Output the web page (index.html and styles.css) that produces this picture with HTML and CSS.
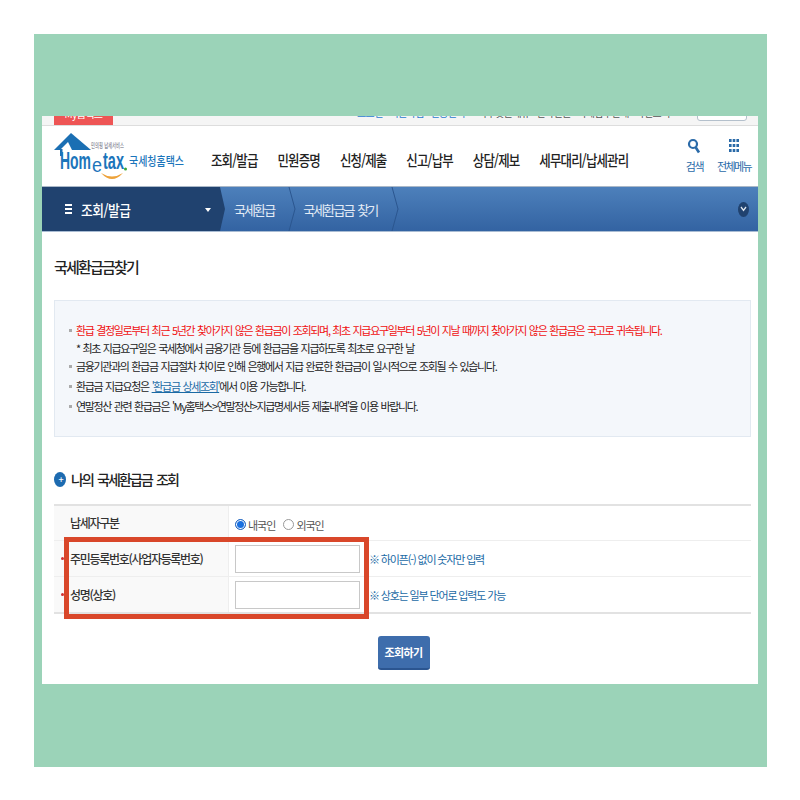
FILE: index.html
```html
<!DOCTYPE html>
<html lang="ko">
<head>
    <meta charset="UTF-8">
    <meta name="viewport" content="width=device-width, initial-scale=1.0">
    <title>국세환급금찾기</title>
    <link rel="stylesheet" href="styles.css">
</head>
<body>
    <div class="stage">
        <div class="shot">
            <div class="topstrip">
                <span class="mybadge">My홈택스</span>
                <span class="toplink blue">로그인 · 회원가입 · 인증센터</span>
                <span class="toplink dark">자주찾는메뉴 · 전자민원 · 국세납부안내 · 화면크기</span>
                <span class="zoombox"></span>
            </div>

            <header class="header">
                <svg class="logo" width="134" height="56" viewBox="0 0 134 56">
                    <path d="M1 22 L18 5 L38 22 Z" fill="#1b6fb3"/>
                    <path d="M7 22 L15 14 L19 22 Z" fill="#fff"/>
                    <path d="M7 21 H9.5 V28 H7 Z" fill="#1b6fb3"/>
                    <text x="38" y="20" class="logo-small" textLength="33" lengthAdjust="spacingAndGlyphs">민의핑 납세서비스</text>
                    <text x="7" y="41" class="logo-home" textLength="31" lengthAdjust="spacingAndGlyphs">Hom</text>
                    <text x="39" y="44" class="logo-e" textLength="10" lengthAdjust="spacingAndGlyphs">e</text>
                    <text x="50" y="41" class="logo-home" textLength="21" lengthAdjust="spacingAndGlyphs">tax</text>
                    <circle cx="72.5" cy="41" r="1.5" fill="#3aa535"/>
                    <path d="M48 45 Q59 57 70 45 Q59 52 48 45 Z" fill="#eda23a"/>
                    <text x="76" y="38" class="logo-name" textLength="55" lengthAdjust="spacingAndGlyphs">국세청홈택스</text>
                </svg>
                <nav class="gnb">
                    <span>조회/발급</span>
                    <span>민원증명</span>
                    <span>신청/제출</span>
                    <span>신고/납부</span>
                    <span>상담/제보</span>
                    <span>세무대리/납세관리</span>
                </nav>
                <div class="tools">
                    <div class="tool">
                        <svg width="14" height="16" viewBox="0 0 14 16"><circle cx="6" cy="6" r="4" fill="none" stroke="#2a6aa8" stroke-width="2.2"/><path d="M8.8 9.5 L12 14.5" stroke="#2a6aa8" stroke-width="2.6"/></svg>
                        <span>검색</span>
                    </div>
                    <div class="tool">
                        <svg width="14" height="16" viewBox="0 0 14 16" fill="#2a6aa8">
                            <rect x="2" y="1" width="2.6" height="3"/><rect x="5.7" y="1" width="2.6" height="3"/><rect x="9.4" y="1" width="2.6" height="3"/>
                            <rect x="2" y="6" width="2.6" height="3"/><rect x="5.7" y="6" width="2.6" height="3"/><rect x="9.4" y="6" width="2.6" height="3"/>
                            <rect x="2" y="11" width="2.6" height="3"/><rect x="5.7" y="11" width="2.6" height="3"/><rect x="9.4" y="11" width="2.6" height="3"/>
                        </svg>
                        <span>전체메뉴</span>
                    </div>
                </div>
            </header>

            <div class="crumbbar">
                <div class="crumb-main">
                    <span class="burger"></span>
                    <span class="crumb-title">조회/발급</span>
                    <span class="caret"></span>
                </div>
                <span class="crumb">국세환급</span>
                <svg class="sep" width="12" height="44" viewBox="0 0 12 44"><path d="M1 0 L7 22 L1 44" fill="none" stroke="#2b568f" stroke-width="1"/></svg>
                <span class="crumb">국세환급금 찾기</span>
                <svg class="sep" width="12" height="44" viewBox="0 0 12 44"><path d="M1 0 L7 22 L1 44" fill="none" stroke="#2b568f" stroke-width="1"/></svg>
                <span class="crumb-toggle">
                    <svg width="7" height="6" viewBox="0 0 7 6"><path d="M1 1 L3.5 4.5 L6 1" fill="none" stroke="#dfe6ef" stroke-width="1.3"/></svg>
                </span>
            </div>

            <main class="content">
                <h1 class="page-title">국세환급금찾기</h1>

                <ul class="notice">
                    <li class="red">환급 결정일로부터 최근 5년간 찾아가지 않은 환급금이 조회되며, 최초 지급요구일부터 5년이 지날 때까지 찾아가지 않은 환급금은 국고로 귀속됩니다.</li>
                    <li class="sub">* 최초 지급요구일은 국세청에서 금융기관 등에 환급금을 지급하도록 최초로 요구한 날</li>
                    <li>금융기관과의 환급금 지급절차 차이로 인해 은행에서 지급 완료한 환급금이 일시적으로 조회될 수 있습니다.</li>
                    <li>환급금 지급요청은 <a class="link" href="#">'환급금 상세조회'</a>에서 이용 가능합니다.</li>
                    <li>연말정산 관련 환급금은 'My홈택스&gt;연말정산&gt;지급명세서등 제출내역'을 이용 바랍니다.</li>
                </ul>

                <h2 class="section-title"><span class="plus">+</span>나의 국세환급금 조회</h2>

                <div class="form-table">
                    <div class="row">
                        <div class="label">납세자구분</div>
                        <div class="field choice">
                            <span class="radio on"></span><span class="radio-text">내국인</span>
                            <span class="radio"></span><span class="radio-text">외국인</span>
                        </div>
                    </div>
                    <div class="row tall">
                        <div class="label req">주민등록번호(사업자등록번호)</div>
                        <div class="field">
                            <input class="text-input" type="text">
                            <span class="hint">※ 하이픈(-) 없이 숫자만 입력</span>
                        </div>
                    </div>
                    <div class="row tall last">
                        <div class="label req">성명(상호)</div>
                        <div class="field">
                            <input class="text-input" type="text">
                            <span class="hint">※ 상호는 일부 단어로 입력도 가능</span>
                        </div>
                    </div>
                    <div class="highlight"></div>
                </div>

                <div class="actions">
                    <button class="btn" type="button">조회하기</button>
                </div>
            </main>
        </div>
    </div>
</body>
</html>
```

FILE: styles.css
```css
body {
    margin: 0;
    background-color: white;
    font-family: "Noto Sans CJK KR", "Noto Sans", sans-serif;
    color: #222;
}

.stage {
    margin: 34px 33px 33px 34px;
    height: 733px;
    padding: 82px 9px 0 8px;
    box-sizing: border-box;
    background-color: #9bd3b8;
}

.shot {
    height: 568px;
    background-color: white;
    overflow: hidden;
}

.topstrip {
    height: 9px;
    display: flex;
    padding-left: 12px;
    background-color: #f5f5f5;
    border-bottom: 1px solid #ddd;
    overflow: hidden;
    font-size: 10px;
    letter-spacing: -0.6px;
}

.mybadge {
    flex-shrink: 0;
    width: 59px;
    height: 18px;
    margin-top: -9px;
    background-color: #ee5555;
    color: white;
    line-height: 14px;
    text-align: center;
}

.toplink {
    flex-shrink: 0;
    height: 12px;
    margin-top: -9px;
    line-height: 12px;
    white-space: nowrap;
}

.toplink.blue {
    width: 110px;
    margin-left: 244px;
    color: #2a7ad0;
}

.toplink.dark {
    width: 210px;
    margin-left: 11px;
    color: #555;
}

.zoombox {
    flex-shrink: 0;
    width: 48px;
    height: 12px;
    margin: -9px 0 0 9px;
    border: 1px solid #b4c0cc;
    border-radius: 3px;
    background-color: white;
}

.header {
    height: 60px;
    display: flex;
    align-items: center;
    border-bottom: 1px solid #aab8c8;
}

.logo {
    margin-left: 11px;
    flex-shrink: 0;
}

.logo-small {
    font-size: 7px;
    fill: #667;
}

.logo-home {
    font-family: "Liberation Sans", sans-serif;
    font-size: 24px;
    font-weight: bold;
    fill: #1b75bb;
}

.logo-e {
    font-family: "Liberation Sans", sans-serif;
    font-size: 20px;
    fill: #1b75bb;
}

.logo-name {
    font-size: 12px;
    font-weight: 500;
    fill: #1b75bb;
}

.gnb {
    flex-shrink: 0;
    width: 418px;
    display: flex;
    gap: 24px;
    margin: 7px 0 0 24px;
    font-size: 15px;
    font-weight: 500;
    letter-spacing: -1px;
    white-space: nowrap;
    transform: scaleX(0.83);
    transform-origin: left;
}

.tools {
    display: flex;
    gap: 14px;
    margin-left: auto;
    padding-right: 7px;
    color: #2a6aa8;
    font-size: 11px;
    line-height: 16px;
    letter-spacing: -1.6px;
    white-space: nowrap;
}

.tool {
    display: flex;
    flex-direction: column;
    align-items: center;
    gap: 4px;
}

.crumbbar {
    height: 44px;
    display: flex;
    align-items: center;
    background: linear-gradient(#4d80bb, #3363a2);
    border-bottom: 1px solid #a9bcd3;
    color: #e4ecf6;
    font-size: 13px;
    letter-spacing: -1.9px;
    word-spacing: 2px;
}

.crumb-main {
    flex-shrink: 0;
    width: 183px;
    height: 44px;
    display: flex;
    align-items: center;
    padding-left: 23px;
    box-sizing: border-box;
    background-color: #20426f;
    clip-path: polygon(0 0, 178px 0, 183px 22px, 178px 44px, 0 44px);
    color: white;
}

.burger {
    flex-shrink: 0;
    width: 7px;
    height: 2px;
    background-color: white;
    box-shadow: 0 -4px 0 white, 0 4px 0 white;
}

.crumb-title {
    flex-shrink: 0;
    margin-left: 9px;
    font-size: 15px;
    font-weight: 500;
    letter-spacing: -0.6px;
    transform: scaleX(0.85);
    transform-origin: left;
}

.caret {
    margin-left: 66px;
    margin-top: 4px;
    border: 3px solid transparent;
    border-top: 4px solid white;
}

.crumb {
    margin-left: 9px;
}

.sep {
    flex-shrink: 0;
    margin: 0 -6px 0 14px;
}

.crumb-toggle {
    width: 11px;
    height: 15px;
    margin-left: auto;
    margin-right: 9px;
    display: flex;
    align-items: center;
    justify-content: center;
    border-radius: 50%;
    background-color: #20426f;
}

.content {
    padding: 0 7px 0 12px;
}

.page-title {
    margin: 23px 0 21px;
    font-size: 15px;
    line-height: 24px;
    font-weight: 500;
    letter-spacing: -1.8px;
}

.notice {
    margin: 0;
    height: 137px;
    padding: 20px 14px 0 21px;
    box-sizing: border-box;
    list-style: none;
    background-color: #f4f7fb;
    border: 1px solid #e2e9f1;
    font-size: 11px;
    line-height: 18px;
    letter-spacing: -1.35px;
    word-spacing: 1px;
    white-space: nowrap;
}

.notice li {
    position: relative;
    margin-bottom: 2px;
}

.notice .red,
.notice .sub {
    margin-bottom: 0;
}

.notice li::before {
    content: "";
    position: absolute;
    left: -7px;
    top: 8px;
    width: 3px;
    height: 3px;
    background-color: #aaa;
}

.notice .sub::before {
    display: none;
}

.notice .red {
    color: #f01010;
}

.link {
    color: #1a6aa5;
}

.section-title {
    display: flex;
    align-items: center;
    margin: 31px 0 14px;
    font-size: 14px;
    line-height: 22px;
    font-weight: 500;
    letter-spacing: -1.9px;
    word-spacing: 2px;
}

.plus {
    width: 12px;
    height: 15px;
    margin-right: 5px;
    border-radius: 50%;
    background-color: #1d6bb0;
    color: white;
    font-size: 9px;
    line-height: 15px;
    text-align: center;
}

.form-table {
    position: relative;
    border-top: 2px solid #e2e2e2;
    border-bottom: 2px solid #e2e2e2;
}

.row {
    display: flex;
    height: 34px;
    border-bottom: 1px solid #eee;
}

.row.tall {
    height: 35px;
}

.row.last {
    border-bottom: none;
}

.label {
    position: relative;
    width: 158px;
    padding-left: 16px;
    background-color: #f9f9f9;
    border-right: 1px solid #eee;
    font-size: 12px;
    font-weight: 500;
    line-height: 34px;
    color: #333;
    letter-spacing: -1.3px;
    white-space: nowrap;
}

.label.req::before {
    content: "";
    position: absolute;
    left: 7px;
    top: 16px;
    width: 3px;
    height: 3px;
    border-radius: 50%;
    background-color: #d03030;
}

.tall .label {
    line-height: 35px;
}

.field {
    display: flex;
    align-items: center;
    padding-left: 6px;
    font-size: 11px;
    letter-spacing: -1px;
    color: #555;
}

.field.choice {
    padding-top: 3px;
}

.radio {
    width: 9px;
    height: 9px;
    border: 1px solid #999;
    border-radius: 50%;
    background-color: white;
    margin-right: 2px;
}

.radio.on {
    border-color: #2a6ac0;
    box-shadow: inset 0 0 0 1px white;
    background-color: #1a70e0;
}

.radio-text {
    margin-right: 8px;
}

.text-input {
    width: 125px;
    height: 28px;
    padding: 0;
    box-sizing: border-box;
    border: 1px solid #c8c8c8;
    background-color: white;
}

.hint {
    margin-left: 9px;
    color: #1a6aa5;
    letter-spacing: -1.15px;
}

.highlight {
    position: absolute;
    left: 10px;
    top: 31px;
    width: 295px;
    height: 72px;
    border: 5px solid #d9472a;
}

.actions {
    display: flex;
    justify-content: center;
    margin-top: 22px;
}

.btn {
    width: 52px;
    height: 34px;
    margin-left: 2px;
    padding: 0;
    border: none;
    border-bottom: 2px solid #2b5590;
    border-radius: 3px;
    background-color: #3e6dac;
    color: white;
    font-family: inherit;
    font-size: 11px;
    font-weight: 700;
    letter-spacing: -0.6px;
}
```
